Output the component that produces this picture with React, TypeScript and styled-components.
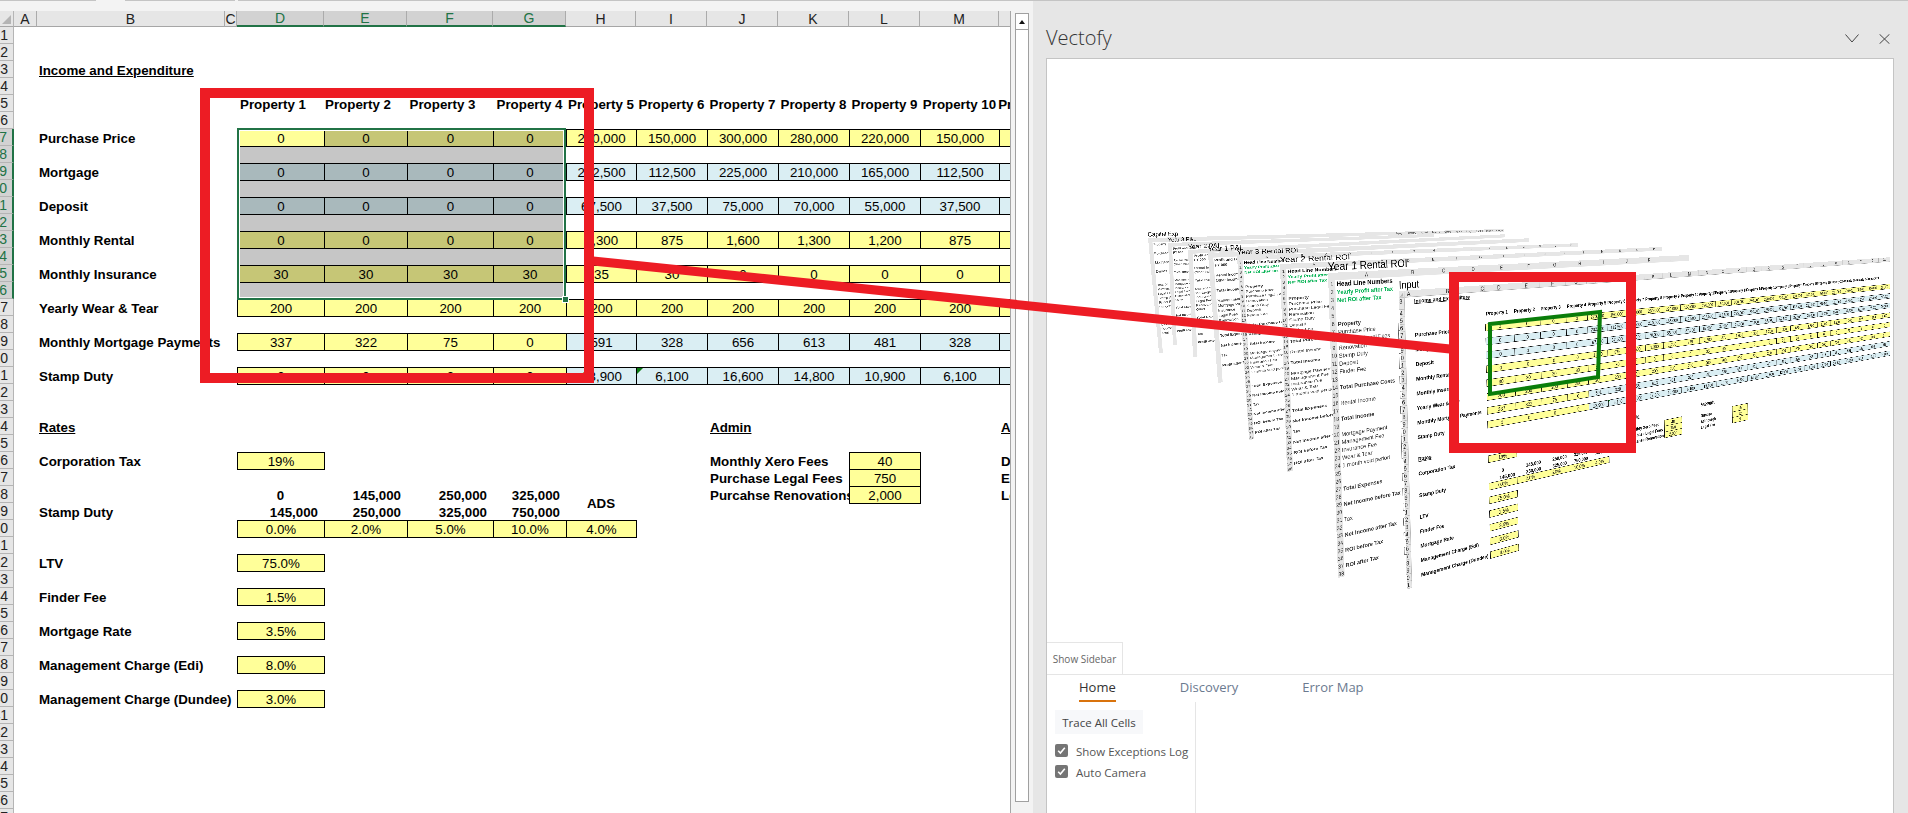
import React from "react";
import styled, { createGlobalStyle, css } from "styled-components";

const GlobalStyle = createGlobalStyle`
  html, body { margin: 0; padding: 0; background: #e6e6e6; }
  body { font-family: "Liberation Sans", Arial, sans-serif; overflow: hidden; }
`;

const YELLOW = "#ffff99";
const BLUE = "#daeef3";
const GREEN = "#217346";
const STAGE_X = 1047;
const STAGE_Y = 59;

type Point = [number, number];

// maps a w*h box onto four screen corners (tl, tr, br, bl)
const quadTransform = (w: number, h: number, quad: Point[]) => {
  const [[x0, y0], [x1, y1], [x2, y2], [x3, y3]] = quad.map(
    ([x, y]) => [x - STAGE_X, y - STAGE_Y] as Point
  );
  const dx1 = x1 - x2;
  const dx2 = x3 - x2;
  const sx = x0 - x1 + x2 - x3;
  const dy1 = y1 - y2;
  const dy2 = y3 - y2;
  const sy = y0 - y1 + y2 - y3;
  const det = dx1 * dy2 - dx2 * dy1;
  const g = (sx * dy2 - dx2 * sy) / det;
  const k = (dx1 * sy - sx * dy1) / det;
  const a = x1 - x0 + g * x1;
  const b = x3 - x0 + k * x3;
  const d = y1 - y0 + g * y1;
  const e = y3 - y0 + k * y3;
  return `matrix3d(${[a / w, d / w, 0, g / w, b / h, e / h, 0, k / h, 0, 0, 1, 0, x0, y0, 0, 1].join(",")})`;
};

/* ---------- spreadsheet ---------- */

const colWidths = [14, 23, 188, 12, 87, 83, 86, 73, 70, 71, 71, 71, 71, 79, 71, 71, 71, 71, 71, 71, 71, 71, 71, 71, 71, 71, 71, 71];
const colName = (i: number) => (i < 26 ? String.fromCharCode(65 + i) : "A" + String.fromCharCode(39 + i));

const Grid = styled.div<{ $rows: number; $topGap: number }>`
  display: grid;
  grid-template-columns: ${colWidths.map((w) => `${w}px`).join(" ")};
  grid-template-rows: 16px ${(p) => 17 + p.$topGap}px repeat(${(p) => p.$rows - 1}, 17px);
  font-size: 13.33px;
  line-height: 19px;
  color: #000;
  background: #fff;
`;

type Placed = { $col: number; $row: number | string };

const placed = (p: Placed) => ({ style: { gridColumn: p.$col, gridRow: p.$row } });

const Corner = styled.div`
  grid-column: 1;
  grid-row: 1;
  background: #e6e6e6;
  border-bottom: 1px solid #a6a6a6;
  border-right: 1px solid #b5b5b5;
  position: relative;
  &::after {
    content: "";
    position: absolute;
    right: 2px;
    bottom: 2px;
    border-left: 9px solid transparent;
    border-bottom: 9px solid #b4b4b4;
  }
`;

const ColHead = styled.div.attrs<Placed>(placed)<Placed & { $on?: boolean }>`
  display: flex;
  align-items: center;
  justify-content: center;
  background: ${(p) => (p.$on ? "#d2d2d2" : "#e6e6e6")};
  color: ${(p) => (p.$on ? GREEN : "#222")};
  border-right: 1px solid #ababab;
  border-bottom: ${(p) => (p.$on ? `2px solid ${GREEN}` : "1px solid #a6a6a6")};
  box-sizing: border-box;
  font-size: 14px;
  line-height: 16px;
`;

const RowHead = styled.div.attrs<Placed>(placed)<Placed & { $on?: boolean }>`
  display: flex;
  justify-content: flex-end;
  overflow: hidden;
  white-space: nowrap;
  padding-right: 5px;
  box-sizing: border-box;
  background: ${(p) => (p.$on ? "#d2d2d2" : "#e6e6e6")};
  color: ${(p) => (p.$on ? GREEN : "#222")};
  border-bottom: 1px solid #b5b5b5;
  border-right: ${(p) => (p.$on ? `2px solid ${GREEN}` : "1px solid #b5b5b5")};
  font-size: 14px;
  line-height: 17px;
`;

const Label = styled.div.attrs<Placed>(placed)<Placed & { $bold?: boolean; $line?: boolean; $indent?: number }>`
  white-space: nowrap;
  padding-left: ${(p) => p.$indent ?? 2}px;
  font-weight: ${(p) => (p.$bold === false ? 400 : 700)};
  ${(p) => p.$line && "text-decoration: underline;"}
`;

const HeadText = styled.div.attrs<Placed>(placed)<Placed & { $shift?: number; $right?: boolean }>`
  font-weight: 700;
  white-space: nowrap;
  display: flex;
  align-items: center;
  justify-content: ${(p) => (p.$right ? "flex-end" : "center")};
  padding-right: ${(p) => p.$shift ?? 0}px;
  padding-top: 1px;
`;

const Value = styled.div.attrs<Placed>(placed)<Placed & { $fill: string; $flag?: boolean }>`
  background: ${(p) => p.$fill};
  border: 1px solid #000;
  margin: 0 -1px -1px 0;
  z-index: 1;
  text-align: center;
  line-height: 17px;
  box-sizing: border-box;
  position: relative;
  white-space: nowrap;
  ${(p) =>
    p.$flag &&
    css`
      &::before {
        content: "";
        position: absolute;
        left: 0;
        top: 0;
        border-top: 6px solid #0b7a12;
        border-right: 6px solid transparent;
      }
    `}
`;

const SelectionShade = styled.div`
  grid-column: 5 / 9;
  grid-row: 8 / 18;
  z-index: 2;
  background: rgba(0, 0, 0, 0.224);
  clip-path: polygon(87px 0, 100% 0, 100% 100%, 0 100%, 0 17px, 87px 17px);
`;

const SelectionFrame = styled.div`
  grid-column: 5 / 9;
  grid-row: 8 / 18;
  z-index: 3;
  margin: -1px 0 -1px 0;
  border: 2px solid ${GREEN};
  box-shadow: inset 0 0 0 1px #fff;
  position: relative;
  &::after {
    content: "";
    position: absolute;
    right: -5px;
    bottom: -5px;
    width: 5px;
    height: 5px;
    background: ${GREEN};
    border: 1px solid #fff;
  }
`;

const moreProps = (v: (string | number)[]) =>
  Array.from({ length: 14 }, (_, i) => v[4 + (i % 5)]);

const tableRows: { row: number; label: string; left: string; right: string; values: (string | number)[] }[] = [
  { row: 7, label: "Purchase Price", left: YELLOW, right: YELLOW, values: [0, 0, 0, 0, "270,000", "150,000", "300,000", "280,000", "220,000", "150,000"] },
  { row: 9, label: "Mortgage", left: BLUE, right: BLUE, values: [0, 0, 0, 0, "202,500", "112,500", "225,000", "210,000", "165,000", "112,500"] },
  { row: 11, label: "Deposit", left: BLUE, right: BLUE, values: [0, 0, 0, 0, "67,500", "37,500", "75,000", "70,000", "55,000", "37,500"] },
  { row: 13, label: "Monthly Rental", left: YELLOW, right: YELLOW, values: [0, 0, 0, 0, "1,300", 875, "1,600", "1,300", "1,200", 875] },
  { row: 15, label: "Monthly Insurance", left: YELLOW, right: YELLOW, values: [30, 30, 30, 30, 35, 30, 0, 0, 0, 0] },
  { row: 17, label: "Yearly Wear & Tear", left: YELLOW, right: YELLOW, values: [200, 200, 200, 200, 200, 200, 200, 200, 200, 200] },
  { row: 19, label: "Monthly Mortgage Payments", left: YELLOW, right: BLUE, values: [337, 322, 75, 0, 591, 328, 656, 613, 481, 328] },
  { row: 21, label: "Stamp Duty", left: YELLOW, right: BLUE, values: [0, 0, 0, 0, "13,900", "6,100", "16,600", "14,800", "10,900", "6,100"] },
];

const singleRates: [number, string, string][] = [
  [26, "Corporation Tax", "19%"],
  [32, "LTV", "75.0%"],
  [34, "Finder Fee", "1.5%"],
  [36, "Mortgage Rate", "3.5%"],
  [38, "Management Charge (Edi)", "8.0%"],
  [40, "Management Charge (Dundee)", "3.0%"],
];

const adminFees: [number, string, string][] = [
  [26, "Monthly Xero Fees", "40"],
  [27, "Purchase Legal Fees", "750"],
  [28, "Purcahse Renovations", "2,000"],
];

const SheetGrid: React.FC<{ first: number; last: number; selected?: boolean; topGap?: number }> = ({
  first,
  last,
  selected,
  topGap = 0,
}) => {
  const at = (row: number) => row - first + 2;
  const rowNums = Array.from({ length: last - first + 1 }, (_, i) => first + i);
  const isOnCol = (i: number) => selected && i >= 3 && i <= 6;
  const isOnRow = (r: number) => selected && r >= 7 && r <= 16;
  return (
    <Grid $rows={last - first + 1} $topGap={topGap}>
      <Corner />
      {colWidths.slice(1).map((_, i) => (
        <ColHead key={i} $col={i + 2} $row={1} $on={isOnCol(i)}>
          {colName(i)}
        </ColHead>
      ))}
      {rowNums.map((r) => (
        <RowHead key={r} $col={1} $row={at(r)} $on={isOnRow(r)}>
          {r}
        </RowHead>
      ))}

      <Label $col={3} $row={at(3)} $line>Income and Expenditure</Label>
      {colWidths.slice(5).map((_, i) => (
        <HeadText key={i} $col={i + 5} $row={at(5)} $shift={i < 3 ? 15 : 0}>
          {`Property ${i + 1}`}
        </HeadText>
      ))}

      {tableRows.map((t) => (
        <React.Fragment key={t.row}>
          <Label $col={3} $row={at(t.row)}>{t.label}</Label>
          {[...t.values, ...moreProps(t.values)].map((v, i) => (
            <Value
              key={i}
              $col={i + 5}
              $row={at(t.row)}
              $fill={i < 4 ? t.left : t.right}
              $flag={t.row === 21 && i === 5}
            >
              {v}
            </Value>
          ))}
        </React.Fragment>
      ))}

      <Label $col={3} $row={at(24)} $line>Rates</Label>
      {singleRates.map(([row, label, value]) => (
        <React.Fragment key={row}>
          <Label $col={3} $row={at(row)}>{label}</Label>
          <Value $col={5} $row={at(row)} $fill={YELLOW}>{value}</Value>
        </React.Fragment>
      ))}

      <Label $col={3} $row={at(29)}>Stamp Duty</Label>
      <HeadText $col={5} $row={at(28)}>0</HeadText>
      {["145,000", "250,000", "325,000"].map((v, i) => (
        <HeadText key={v} $col={6 + i} $row={at(28)} $right $shift={6}>{v}</HeadText>
      ))}
      {["145,000", "250,000", "325,000", "750,000"].map((v, i) => (
        <HeadText key={v} $col={5 + i} $row={at(29)} $right $shift={6}>{v}</HeadText>
      ))}
      <HeadText $col={9} $row={`${at(28)} / span 2`}>ADS</HeadText>
      {["0.0%", "2.0%", "5.0%", "10.0%", "4.0%"].map((v, i) => (
        <Value key={v} $col={5 + i} $row={at(30)} $fill={YELLOW}>{v}</Value>
      ))}

      <Label $col={11} $row={at(24)} $line $indent={3}>Admin</Label>
      {adminFees.map(([row, label, value]) => (
        <React.Fragment key={row}>
          <Label $col={11} $row={at(row)} $indent={3}>{label}</Label>
          <Value $col={13} $row={at(row)} $fill={YELLOW}>{value}</Value>
        </React.Fragment>
      ))}

      <Label $col={15} $row={at(24)} $line>Accounts</Label>
      {["Dundee", "Edinburgh", "Legal Fee"].map((v, i) => (
        <React.Fragment key={v}>
          <Label $col={15} $row={at(26 + i)}>{v}</Label>
          <Value $col={17} $row={at(26 + i)} $fill={YELLOW}>{[15, 12, 9][i]}</Value>
        </React.Fragment>
      ))}

      {selected && (
        <>
          <SelectionShade />
          <SelectionFrame />
        </>
      )}
    </Grid>
  );
};

/* ---------- excel window chrome ---------- */

const Page = styled.div`
  width: 1908px;
  height: 813px;
  position: relative;
  overflow: hidden;
  display: flex;
  flex-direction: column;
`;

const TopRule = styled.div`
  display: flex;
  height: 1px;
  flex: none;
  background: #f3f3f3;
`;

const RuleBit = styled.div<{ $w: number | string; $off?: boolean }>`
  width: ${(p) => (typeof p.$w === "number" ? `${p.$w}px` : p.$w)};
  flex: ${(p) => (p.$w === "auto" ? 1 : "none")};
  background: ${(p) => (p.$off ? "transparent" : "#c4c4c4")};
`;

const Columns = styled.div`
  flex: 1;
  display: flex;
  min-height: 0;
`;

const Workbook = styled.div`
  width: 1033px;
  flex: none;
  display: flex;
  background: #f3f3f3;
  padding-top: 10px;
  box-sizing: border-box;
`;

const SheetClip = styled.div`
  width: 1010px;
  height: 802px;
  overflow: hidden;
  flex: none;
  border-right: 1px solid #a6a6a6;
  box-sizing: content-box;
`;

const ScrollGutter = styled.div`
  width: 22px;
  padding: 2px 4px 0 4px;
  box-sizing: border-box;
  flex: none;
`;

const ScrollTrack = styled.div`
  width: 14px;
  height: 789px;
  background: #fff;
  border: 1px solid #a0a0a0;
  box-sizing: border-box;
`;

const ScrollUp = styled.div`
  height: 15px;
  border-bottom: 1px solid #a0a0a0;
  display: flex;
  align-items: center;
  justify-content: center;
  &::after {
    content: "";
    border-left: 3.5px solid transparent;
    border-right: 3.5px solid transparent;
    border-bottom: 4px solid #111;
  }
`;

/* ---------- vectofy pane ---------- */

const Pane = styled.div`
  flex: 1;
  display: flex;
  flex-direction: column;
  background: #e6e6e6;
  padding-left: 13px;
  padding-right: 14px;
  min-width: 0;
`;

const PaneHead = styled.div`
  height: 57px;
  flex: none;
  display: flex;
  align-items: flex-end;
  justify-content: space-between;
  padding-bottom: 6px;
  box-sizing: border-box;
`;

const PaneTitle = styled.div`
  font-family: "Open Sans", "Noto Sans", sans-serif;
  font-weight: 300;
  font-size: 20px;
  line-height: 28px;
  color: #333;
`;

const PaneIcons = styled.div`
  display: flex;
  gap: 20px;
  padding: 0 4px 8px 0;
  color: #444;
`;

const PaneBody = styled.div`
  flex: 1;
  display: flex;
  flex-direction: column;
  background: #fff;
  border: 1px solid #c4c4c4;
  border-bottom: 0;
  min-height: 0;
`;

const Stage = styled.div`
  flex: 1;
  position: relative;
  overflow: hidden;
  min-height: 0;
  border-bottom: 1px solid #e5e5e5;
`;

const PlaneStack = styled.div`
  position: absolute;
  inset: 0;
  filter: blur(0.55px);
`;

const Plane = styled.div.attrs<{ $quad: Point[]; $w: number; $h: number }>((p) => ({
  style: { transform: quadTransform(p.$w, p.$h, p.$quad) },
}))<{ $quad: Point[]; $w: number; $h: number }>`
  position: absolute;
  left: 0;
  top: 0;
  width: ${(p) => p.$w}px;
  height: ${(p) => p.$h}px;
  transform-origin: 0 0;
  background: #fff;
`;

const PlaneTitle = styled.div`
  position: absolute;
  left: 0;
  bottom: 100%;
  font-size: 24px;
  line-height: 26px;
  white-space: nowrap;
  color: #000;
`;

const PlaneClip = styled.div`
  width: 100%;
  height: 100%;
  overflow: hidden;
`;

const MiniGrid = styled.div<{ $label: number }>`
  display: grid;
  grid-template-columns: 16px ${(p) => p.$label}px repeat(24, 82px);
  grid-template-rows: 16px repeat(42, 17px);
  font-size: 13.33px;
  line-height: 17px;
  color: #222;
`;

const MiniHead = styled.div.attrs<Placed>(placed)<Placed>`
  background: #e6e6e6;
  text-align: center;
  font-size: 12px;
  line-height: 16px;
  color: #333;
`;

const MiniRowNum = styled(MiniHead)`
  line-height: 17px;
`;

const MiniLabel = styled.div.attrs<Placed>(placed)<Placed & { $kind?: string }>`
  white-space: nowrap;
  padding-left: 3px;
  font-weight: ${(p) => (p.$kind ? 700 : 400)};
  color: ${(p) => (p.$kind === "green" ? "#00b050" : p.$kind === "big" ? "#000" : "#333")};
  font-size: ${(p) => (p.$kind === "big" ? "14.5px" : "13.33px")};
`;

const MiniBox = styled.div.attrs<Placed>(placed)<Placed>`
  border: 1px solid #555;
  margin: 0 -1px -1px 0;
  background: #fff;
`;

const CapitalTop = styled.div`
  position: absolute;
  top: 0;
  right: 0;
  display: grid;
  grid-template-columns: repeat(10, 88px);
  grid-template-rows: 16px 17px 17px;
  font-size: 12px;
  line-height: 16px;
  text-align: center;
  color: #444;
`;

const CapitalCell = styled.div<{ $head?: boolean; $gap?: boolean }>`
  background: ${(p) => (p.$gap ? "#fff" : p.$head ? "#e6e6e6" : BLUE)};
  white-space: nowrap;
`;

type LabelRow = [number, string, string?];

const roiLabels: LabelRow[] = [
  [1, "Head Line Numbers", "big"],
  [2, "Yearly Profit after Tax", "green"],
  [3, "Net ROI after Tax", "green"],
  [6, "Property", "bold"],
  [7, "Purchase Price"],
  [8, "Purchase Legal Fees"],
  [9, "Renovation"],
  [10, "Stamp Duty"],
  [11, "Deposit"],
  [12, "Finder Fee"],
  [14, "Total Purchase Costs", "bold"],
  [16, "Rental Income"],
  [18, "Total Income", "bold"],
  [20, "Mortgage Payment"],
  [21, "Management Fee"],
  [22, "Insurance Fee"],
  [23, "Wear & Tear"],
  [24, "1 month void period"],
  [27, "Total Expenses", "bold"],
  [29, "Net Income before Tax", "bold"],
  [31, "Tax"],
  [33, "Net Income after Tax", "bold"],
  [35, "ROI before Tax", "bold"],
  [37, "ROI after Tax", "bold"],
];

const pnlLabels: LabelRow[] = [
  [1, "Profit and Loss", "bold"],
  [2, "FY 000", "bold"],
  [4, "Rental Income"],
  [5, "Other Income"],
  [7, "Total Income", "bold"],
  [9, "Management Fee"],
  [10, "Mortgage Payment"],
  [11, "Insurance"],
  [12, "Legal Fees"],
  [13, "Renovation"],
  [14, "Other"],
  [16, "Total Expenses", "bold"],
  [18, "Net Income", "bold"],
  [20, "Tax"],
  [22, "Profit after Tax", "bold"],
];

const capitalLabels: LabelRow[] = [
  [1, "Property"],
  [3, "Purchase"],
  [5, "Mortgage"],
  [7, "Deposit"],
  [10, "Year 0 Equity"],
  [11, "Purchase Costs"],
  [12, "Legal Fees"],
  [13, "Stamp Duty"],
  [14, "Finder Fee"],
  [15, "Renovation"],
  [18, "Year 1 Equity"],
  [19, "Cash Flow"],
  [20, "Deposit"],
  [21, "Total"],
];

const MiniSheet: React.FC<{ labels: LabelRow[]; labelWidth: number; rows: number; boxes?: boolean; numbered?: boolean }> = ({
  labels,
  labelWidth,
  rows,
  boxes,
  numbered,
}) => (
  <MiniGrid $label={labelWidth}>
    <MiniHead $col={1} $row={1} />
    {Array.from({ length: 16 }, (_, i) => (
      <MiniHead key={i} $col={i + 2} $row={1}>
        {numbered ? colName(i) : ""}
      </MiniHead>
    ))}
    {Array.from({ length: rows }, (_, i) => (
      <MiniRowNum key={i} $col={1} $row={i + 2}>
        {numbered ? i + 1 : ""}
      </MiniRowNum>
    ))}
    {labels.map(([row, text, kind]) => (
      <MiniLabel key={row} $col={2} $row={row + 1} $kind={kind}>
        {text}
      </MiniLabel>
    ))}
    {boxes &&
      labels
        .filter(([row]) => row > 6)
        .map(([row]) => <MiniBox key={row} $col={3} $row={row + 1} />)}
  </MiniGrid>
);

type SheetSpec = {
  title: string;
  w: number;
  h: number;
  quad: Point[];
  kind: "capital" | "pnl" | "roi";
};

const sheets: SheetSpec[] = [
  { title: "Capital Exp", w: 2150, h: 440, kind: "capital", quad: [[1148, 238], [1504, 229], [1504, 305], [1159, 353]] },
  { title: "Year 3 P&L", w: 2070, h: 440, kind: "pnl", quad: [[1168, 243], [1520, 231], [1520, 303], [1173, 345]] },
  { title: "Year 2 P&L", w: 1680, h: 440, kind: "pnl", quad: [[1188, 250], [1550, 232], [1550, 314], [1193, 357]] },
  { title: "Year 1 P&L", w: 1867, h: 440, kind: "pnl", quad: [[1208, 253], [1600, 235], [1600, 326], [1218, 383]] },
  { title: "Year 3 Rental ROI", w: 2100, h: 660, kind: "roi", quad: [[1237, 256], [1690, 239], [1690, 360], [1249, 440]] },
  { title: "Year 2 Rental ROI", w: 1505, h: 660, kind: "roi", quad: [[1280, 264], [1683, 246], [1683, 393], [1287, 472]] },
  { title: "Year 1 Rental ROI", w: 1100, h: 660, kind: "roi", quad: [[1328, 273], [1689, 255], [1689, 488], [1338, 578]] },
];

const inputQuad: Point[] = [[1399, 291], [1893, 257], [1893, 452], [1407, 594]];

const PerspectiveStack: React.FC = () => (
  <PlaneStack>
    {sheets.map((s) => (
      <Plane key={s.title} $w={s.w} $h={s.h} $quad={s.quad}>
        <PlaneTitle>{s.title}</PlaneTitle>
        <PlaneClip>
          {s.kind === "capital" && <MiniSheet labels={capitalLabels} labelWidth={100} rows={26} />}
          {s.kind === "pnl" && <MiniSheet labels={pnlLabels} labelWidth={170} rows={26} />}
          {s.kind === "roi" && <MiniSheet labels={roiLabels} labelWidth={150} rows={38} boxes numbered />}
        </PlaneClip>
        {s.kind === "capital" && (
          <CapitalTop>
            {Array.from({ length: 10 }, (_, i) => (
              <CapitalCell key={i} $head>{`Property ${i + 1}`}</CapitalCell>
            ))}
            {["", "", "", "", "88,000", "60,000", "60,000", "88,000", "60,000", "60,000"].map((v, i) => (
              <CapitalCell key={i} $gap={!v}>{v}</CapitalCell>
            ))}
            {["", "", "", "", "", "", "6,600", "6,600", "6,600", "6,600"].map((v, i) => (
              <CapitalCell key={i} $gap={!v}>{v}</CapitalCell>
            ))}
          </CapitalTop>
        )}
      </Plane>
    ))}
    <Plane $w={2013} $h={700} $quad={inputQuad}>
      <PlaneTitle>Input</PlaneTitle>
      <PlaneClip>
        <SheetGrid first={3} last={41} topGap={10} />
      </PlaneClip>
    </Plane>
  </PlaneStack>
);

const SidebarTab = styled.div`
  position: absolute;
  left: 0;
  bottom: 0;
  width: 76px;
  height: 32px;
  background: #fff;
  border: 1px solid #e5e5e5;
  border-left: 0;
  border-bottom: 0;
  box-sizing: border-box;
  display: flex;
  align-items: center;
  justify-content: center;
  font-family: "Open Sans", sans-serif;
  font-size: 10px;
  color: #666;
`;

const NavRow = styled.div`
  display: flex;
  gap: 64px;
  padding-left: 32px;
  height: 27px;
  flex: none;
  box-sizing: border-box;
  font-family: "Open Sans", sans-serif;
  font-size: 13px;
  line-height: 25px;
`;

const NavTab = styled.div<{ $active?: boolean }>`
  color: ${(p) => (p.$active ? "#333" : "#6b7a8f")};
  height: 25px;
  border-bottom: ${(p) => (p.$active ? "2px solid #d9730d" : "2px solid transparent")};
`;

const TabBody = styled.div`
  height: 111px;
  flex: none;
  display: flex;
`;

const SideColumn = styled.div`
  width: 149px;
  flex: none;
  border-right: 1px solid #e5e5e5;
  padding: 8px 0 0 8px;
  box-sizing: border-box;
  font-family: "Open Sans", sans-serif;
  font-size: 11.5px;
  color: #555;
`;

const TraceButton = styled.div`
  width: 88px;
  height: 24px;
  background: #f7f8fa;
  display: flex;
  align-items: center;
  justify-content: center;
  color: #444;
  margin-bottom: 7px;
`;

const CheckRow = styled.div`
  display: flex;
  align-items: center;
  gap: 8px;
  height: 21px;
  white-space: nowrap;
`;

const CheckBox = styled.span`
  width: 13px;
  height: 13px;
  border-radius: 2px;
  background: #757575;
  display: flex;
  align-items: center;
  justify-content: center;
  flex: none;
  margin-top: -3px;
`;

const Overlay = styled.svg`
  position: absolute;
  left: 0;
  top: 0;
  pointer-events: none;
  z-index: 10;
`;

const Check: React.FC = () => (
  <CheckBox>
    <svg width="9" height="9" viewBox="0 0 9 9">
      <path d="M1.2 4.8 L3.4 7 L7.8 1.8" fill="none" stroke="#fff" strokeWidth="1.6" />
    </svg>
  </CheckBox>
);

const App: React.FC = () => (
  <>
    <GlobalStyle />
    <Page>
      <TopRule>
        <RuleBit $w={96} />
        <RuleBit $w={29} $off />
        <RuleBit $w={110} />
        <RuleBit $w={3} $off />
        <RuleBit $w="auto" />
      </TopRule>
      <Columns>
        <Workbook>
          <SheetClip>
            <SheetGrid first={1} last={47} selected />
          </SheetClip>
          <ScrollGutter>
            <ScrollTrack>
              <ScrollUp />
            </ScrollTrack>
          </ScrollGutter>
        </Workbook>
        <Pane>
          <PaneHead>
            <PaneTitle>Vectofy</PaneTitle>
            <PaneIcons>
              <svg width="14" height="9" viewBox="0 0 14 9">
                <path d="M0.5 0.5 L7 8 L13.5 0.5" fill="none" stroke="currentColor" strokeWidth="1" />
              </svg>
              <svg width="11" height="10" viewBox="0 0 11 10">
                <path d="M0.5 0.2 L10.5 9.8 M10.5 0.2 L0.5 9.8" fill="none" stroke="currentColor" strokeWidth="1" />
              </svg>
            </PaneIcons>
          </PaneHead>
          <PaneBody>
            <Stage>
              <PerspectiveStack />
              <SidebarTab>Show Sidebar</SidebarTab>
            </Stage>
            <NavRow>
              <NavTab $active>Home</NavTab>
              <NavTab>Discovery</NavTab>
              <NavTab>Error Map</NavTab>
            </NavRow>
            <TabBody>
              <SideColumn>
                <TraceButton>Trace All Cells</TraceButton>
                <CheckRow>
                  <Check />
                  Show Exceptions Log
                </CheckRow>
                <CheckRow>
                  <Check />
                  Auto Camera
                </CheckRow>
              </SideColumn>
            </TabBody>
          </PaneBody>
        </Pane>
      </Columns>

      <Overlay width="1908" height="813" viewBox="0 0 1908 813">
        <rect x="205" y="93" width="384" height="285" fill="none" stroke="#ed1c24" strokeWidth="10" />
        <line x1="593" y1="261" x2="1450" y2="349" stroke="#ed1c24" strokeWidth="9" />
        <polygon points="1490,324 1600,312 1598,377 1490,394" fill="none" stroke="#0a7d0a" strokeWidth="4" />
        <rect x="1454" y="277" width="177" height="171" fill="none" stroke="#ed1c24" strokeWidth="10" />
      </Overlay>
    </Page>
  </>
);

export default App;
